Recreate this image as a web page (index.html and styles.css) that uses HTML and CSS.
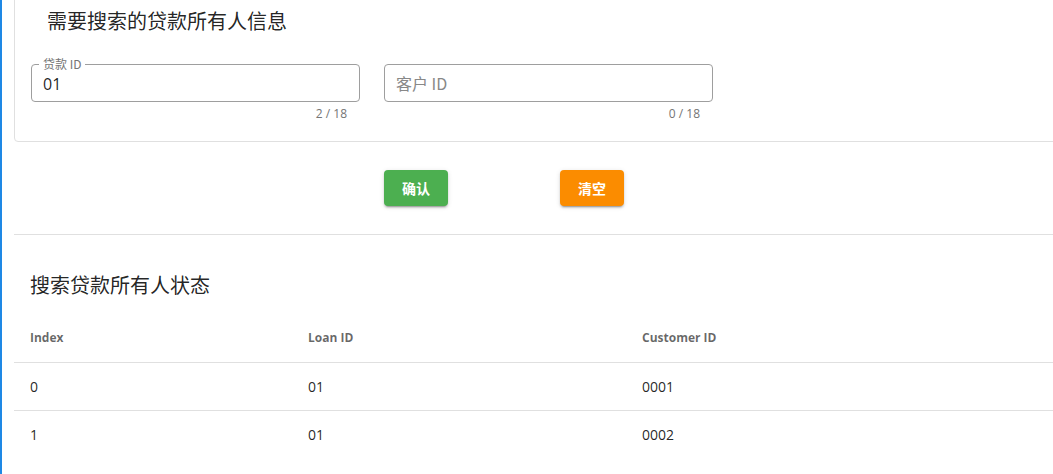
FILE: index.html
```html
<!DOCTYPE html>
<html lang="zh">
<head>
<meta charset="utf-8">
<link rel="stylesheet" href="styles.css">
</head>
<body>
<div class="app">
  <div class="rail"></div>
  <main class="content">
    <section class="card">
      <h2 class="card-title">需要搜索的贷款所有人信息</h2>
      <div class="fields">
        <div class="field">
          <div class="outline filled">
            <span class="label">贷款 ID</span>
            <span class="value">01</span>
          </div>
          <div class="counter">2 / 18</div>
        </div>
        <div class="field">
          <div class="outline">
            <span class="placeholder">客户 ID</span>
          </div>
          <div class="counter">0 / 18</div>
        </div>
      </div>
    </section>
    <div class="actions">
      <button class="btn btn-green">确认</button>
      <button class="btn btn-orange">清空</button>
    </div>
    <hr class="divider">
    <h3 class="section-title">搜索贷款所有人状态</h3>
    <table class="table">
      <thead>
        <tr><th class="c1">Index</th><th class="c2">Loan ID</th><th>Customer ID</th></tr>
      </thead>
      <tbody>
        <tr><td>0</td><td>01</td><td>0001</td></tr>
        <tr><td>1</td><td>01</td><td>0002</td></tr>
      </tbody>
    </table>
  </main>
</div>
</body>
</html>
```

FILE: styles.css
```css
html, body {
  margin: 0;
  padding: 0;
  overflow: hidden;
  background: #fff;
}
body {
  font-family: "Open Sans", "Noto Sans CJK SC", sans-serif;
  color: rgba(0,0,0,0.87);
}
.app {
  display: flex;
  width: 1053px;
  min-height: 474px;
}
.rail {
  width: 2px;
  flex: none;
  background: #1e88e5;
}
.content {
  flex: 1;
  padding-left: 12px;
  margin-right: -20px;
}
.card {
  margin-top: -10px;
  border: 1px solid #e0e0e0;
  border-radius: 4px;
  padding: 16px 16px 0;
  height: 152px;
  box-sizing: border-box;
}
.card-title {
  margin: 0;
  padding-left: 16px;
  font-family: "Noto Sans CJK SC", sans-serif;
  font-weight: 400;
  font-size: 20px;
  line-height: 28px;
  color: rgba(0,0,0,0.87);
}
.fields {
  display: flex;
  gap: 24px;
  margin-top: 29px;
}
.field {
  width: 329px;
}
.outline {
  position: relative;
  height: 38px;
  box-sizing: border-box;
  border: 1px solid #9e9e9e;
  border-radius: 4px;
  padding: 0 11px;
  display: flex;
  align-items: center;
}
.label {
  position: absolute;
  left: 7px;
  top: -9px;
  padding: 0 4px;
  background: #fff;
  font-family: "Noto Sans CJK SC", sans-serif;
  font-size: 12px;
  line-height: 16px;
  color: #757575;
}
.value {
  font-size: 16px;
  color: rgba(0,0,0,0.87);
  padding-top: 2px;
}
.placeholder {
  font-family: "Noto Sans CJK SC", sans-serif;
  font-size: 16px;
  color: #888;
}
.counter {
  text-align: right;
  padding-right: 13px;
  margin-top: 4px;
  font-size: 12px;
  line-height: 16px;
  color: #757575;
}
.actions {
  display: flex;
  gap: 112px;
  padding-left: 370px;
  margin-top: 28px;
}
.btn {
  width: 64px;
  height: 36px;
  border: none;
  border-radius: 4px;
  color: #fff;
  font-family: "Noto Sans CJK SC", sans-serif;
  font-weight: 700;
  font-size: 14px;
  box-shadow: 0 3px 1px -2px rgba(0,0,0,.2), 0 2px 2px 0 rgba(0,0,0,.14), 0 1px 5px 0 rgba(0,0,0,.12);
}
.btn-green { background: #4caf50; }
.btn-orange { background: #fb8c00; }
.divider {
  margin: 28px 0 0;
  border: none;
  border-top: 1px solid #e0e0e0;
}
.section-title {
  margin: 0;
  padding: 36px 16px 0;
  font-family: "Noto Sans CJK SC", sans-serif;
  font-weight: 400;
  font-size: 20px;
  line-height: 28px;
  height: 42px;
}
.table {
  width: 100%;
  border-collapse: collapse;
  margin-top: 1px;
}
.table th, .table td {
  text-align: left;
  padding: 0 16px;
  height: 48px;
  box-sizing: border-box;
}
.table th {
  font-size: 12px;
  font-weight: 700;
  color: rgba(0,0,0,0.6);
  border-bottom: 1px solid #e0e0e0;
}
.table td {
  font-size: 14px;
  color: rgba(0,0,0,0.87);
}
.table tbody tr + tr td {
  border-top: 1px solid #e0e0e0;
}
.table .c1 { width: 278px; }
.table .c2 { width: 334px; }
```
